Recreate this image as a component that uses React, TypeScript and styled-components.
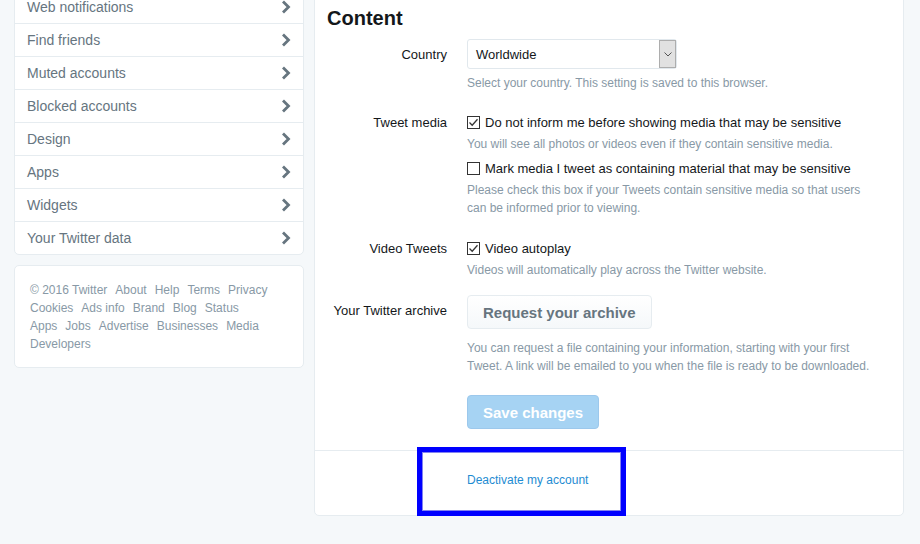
import React from "react";
import styled, { createGlobalStyle } from "styled-components";

const Global = createGlobalStyle`
  html, body { margin: 0; padding: 0; background: #f5f8fa; overflow: hidden; }
  body { font-family: "Liberation Sans", Arial, sans-serif; color: #14171a; }
  * { box-sizing: border-box; }
`;

const Page = styled.div`
  display: flex;
  align-items: flex-start;
  gap: 10px;
  padding-left: 14px;
  margin-top: -10px;
  width: 920px;
  height: 554px;
`;

const Sidebar = styled.div`
  width: 290px;
  display: flex;
  flex-direction: column;
  gap: 10px;
`;

const Card = styled.div`
  background: #fff;
  border: 1px solid #e6ecf0;
  border-radius: 5px;
`;

const NavRow = styled.div`
  display: flex;
  align-items: center;
  justify-content: space-between;
  height: 33px;
  padding: 0 12px;
  border-bottom: 1px solid #e6ecf0;
  font-size: 14px;
  color: #66757f;
  &:last-child { height: 32px; border-bottom: none; }
`;

const FooterCard = styled(Card)`
  padding: 15px 32px 14px 15px;
  display: flex;
  flex-wrap: wrap;
  column-gap: 8px;
  font-size: 12px;
  line-height: 18px;
  color: #8899a6;
`;

const Main = styled(Card)`
  width: 590px;
`;

const Section = styled.div`
  padding: 15px 12px 21px;
  border-bottom: 1px solid #e6ecf0;
`;

const Heading = styled.h2`
  margin: 0;
  font-size: 20px;
  line-height: 24px;
  font-weight: bold;
  color: #14171a;
`;

const FormRow = styled.div<{ $mt: number }>`
  display: flex;
  margin-top: ${(p) => p.$mt}px;
`;

const Label = styled.div<{ $pt: number }>`
  width: 120px;
  margin-right: 20px;
  text-align: right;
  font-size: 13px;
  line-height: 20px;
  padding-top: ${(p) => p.$pt}px;
  color: #14171a;
`;

const Controls = styled.div`
  width: 405px;
  display: flex;
  flex-direction: column;
  align-items: flex-start;
`;

const SelectBox = styled.div`
  width: 210px;
  height: 30px;
  border: 1px solid #e1e8ed;
  border-radius: 3px;
  display: flex;
  align-items: stretch;
  font-size: 13px;
  color: #14171a;
`;

const SelectText = styled.div`
  flex: 1;
  padding-left: 8px;
  padding-top: 1px;
  display: flex;
  align-items: center;
`;

const SelectArrow = styled.div`
  width: 17px;
  background: #e1e1e1;
  border: 1px solid #adadad;
  display: flex;
  align-items: center;
  justify-content: center;
`;

const Help = styled.div<{ $mt: number }>`
  margin-top: ${(p) => p.$mt}px;
  font-size: 12px;
  line-height: 18px;
  color: #8899a6;
`;

const CheckLine = styled.label<{ $mt?: number }>`
  display: flex;
  align-items: center;
  gap: 5px;
  height: 20px;
  margin-top: ${(p) => p.$mt ?? 0}px;
  font-size: 13px;
  color: #14171a;
`;

const Box = styled.span`
  width: 13px;
  height: 13px;
  border: 1px solid #333;
  background: #fff;
  display: flex;
  align-items: center;
  justify-content: center;
`;

const Button = styled.button`
  height: 34px;
  padding: 0 15px;
  border: 1px solid #e6ecf0;
  border-radius: 4px;
  background: linear-gradient(#fff, #f5f8fa);
  color: #66757f;
  font-family: "Liberation Sans", Arial, sans-serif;
  font-size: 15px;
  font-weight: bold;
`;

const SaveButton = styled(Button)`
  margin-top: 20px;
  background: #a6d3f3;
  border-color: #9cc8ec;
  color: #fff;
`;

const FooterSection = styled.div`
  position: relative;
  padding: 20px 0 26px 152px;
  font-size: 12px;
  line-height: 18px;
`;

const Link = styled.a`
  color: #1e8cd2;
  text-decoration: none;
`;

const Highlight = styled.div`
  position: absolute;
  left: 102px;
  top: -4px;
  width: 209px;
  height: 69px;
  border: 5px solid #0000ff;
  box-shadow: inset 0 0 0 1px #8383f0;
  pointer-events: none;
`;

const Chevron = () => (
  <svg width="10" height="14" viewBox="0 0 10 14">
    <path d="M2 1.5 L7.5 7 L2 12.5" fill="none" stroke="#66757f" strokeWidth="2.8" />
  </svg>
);

const Check = ({ on }: { on: boolean }) => (
  <Box>
    {on && (
      <svg width="11" height="11" viewBox="0 0 11 11">
        <path d="M1.5 5.5 L4.2 8.2 L9.5 2.3" fill="none" stroke="#333" strokeWidth="1.3" />
      </svg>
    )}
  </Box>
);

const navItems = [
  "Web notifications",
  "Find friends",
  "Muted accounts",
  "Blocked accounts",
  "Design",
  "Apps",
  "Widgets",
  "Your Twitter data",
];

const footerLinks = [
  "© 2016 Twitter",
  "About",
  "Help",
  "Terms",
  "Privacy",
  "Cookies",
  "Ads info",
  "Brand",
  "Blog",
  "Status",
  "Apps",
  "Jobs",
  "Advertise",
  "Businesses",
  "Media",
  "Developers",
];

export default function App() {
  return (
    <>
      <Global />
      <Page>
        <Sidebar>
          <Card>
            {navItems.map((t) => (
              <NavRow key={t}>
                <span>{t}</span>
                <Chevron />
              </NavRow>
            ))}
          </Card>
          <FooterCard>
            {footerLinks.map((t) => (
              <span key={t}>{t}</span>
            ))}
          </FooterCard>
        </Sidebar>
        <Main>
          <Section>
            <Heading>Content</Heading>
            <FormRow $mt={9}>
              <Label $pt={6}>Country</Label>
              <Controls>
                <SelectBox>
                  <SelectText>Worldwide</SelectText>
                  <SelectArrow>
                    <svg width="8" height="5" viewBox="0 0 8 5">
                      <path d="M0.5 0.5 L4 4 L7.5 0.5" fill="none" stroke="#555" strokeWidth="1" />
                    </svg>
                  </SelectArrow>
                </SelectBox>
                <Help $mt={5}>Select your country. This setting is saved to this browser.</Help>
              </Controls>
            </FormRow>
            <FormRow $mt={20}>
              <Label $pt={1}>Tweet media</Label>
              <Controls>
                <CheckLine>
                  <Check on />
                  Do not inform me before showing media that may be sensitive
                </CheckLine>
                <Help $mt={3}>You will see all photos or videos even if they contain sensitive media.</Help>
                <CheckLine $mt={5}>
                  <Check on={false} />
                  Mark media I tweet as containing material that may be sensitive
                </CheckLine>
                <Help $mt={3}>
                  Please check this box if your Tweets contain sensitive media so that users can be informed prior to
                  viewing.
                </Help>
              </Controls>
            </FormRow>
            <FormRow $mt={21}>
              <Label $pt={1}>Video Tweets</Label>
              <Controls>
                <CheckLine>
                  <Check on />
                  Video autoplay
                </CheckLine>
                <Help $mt={3}>Videos will automatically play across the Twitter website.</Help>
              </Controls>
            </FormRow>
            <FormRow $mt={16}>
              <Label $pt={6}>Your Twitter archive</Label>
              <Controls>
                <Button>Request your archive</Button>
                <Help $mt={10}>
                  You can request a file containing your information, starting with your first Tweet. A link will be
                  emailed to you when the file is ready to be downloaded.
                </Help>
                <SaveButton>Save changes</SaveButton>
              </Controls>
            </FormRow>
          </Section>
          <FooterSection>
            <Link href="#">Deactivate my account</Link>
            <Highlight />
          </FooterSection>
        </Main>
      </Page>
    </>
  );
}
